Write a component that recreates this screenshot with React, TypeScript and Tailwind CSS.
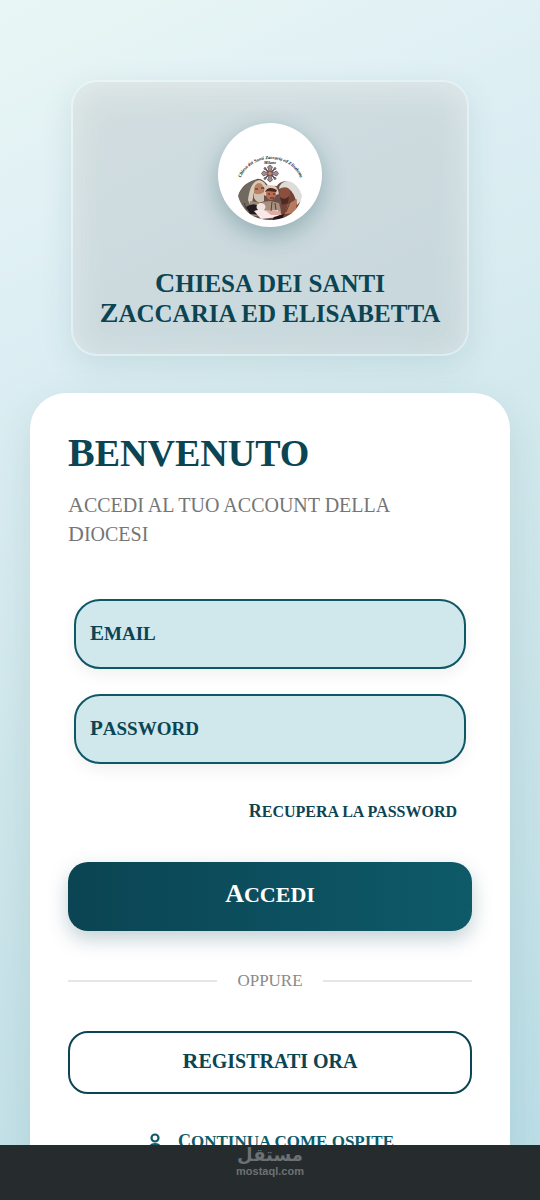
import type { ReactNode } from "react";

type FieldProps = {
  id: string;
  label: string;
  type: string;
};

function Field({ id, label, type }: FieldProps) {
  return (
    <div className="mx-1.5 flex h-[70px] items-center rounded-[26px] border-2 border-[#0d5866] bg-[#d0e8ec] px-3.5 shadow-[0_6px_16px_rgba(0,0,0,0.06)]">
      <label
        htmlFor={id}
        className="block text-[19px] leading-6 font-bold uppercase text-[#0b4453] first-letter:text-[21px] first-letter:leading-none"
      >
        {label}
      </label>
      <input
        id={id}
        type={type}
        className="ml-3 min-w-0 flex-1 bg-transparent text-[19px] text-[#0b4453] outline-none"
      />
    </div>
  );
}

function TitleLine({ children }: { children: ReactNode }) {
  return <span className="block first-letter:text-[28px] first-letter:leading-none">{children}</span>;
}

function Emblem() {
  return (
    <svg viewBox="0 0 104 104" className="size-full" role="img" aria-label="Chiesa dei Santi">
      <defs>
        <path id="arc" d="M21 64 A 31.500 28 0 0 1 84 64" />
        <clipPath id="family">
          <path d="M20 73 C23 63 31 58 39 56 C43 55 47 59 50 62 L59 63 C61 59 67 57 73 59 C80 62 83 69 84 73 C81 88 69 97 52 97 C36 97 25 89 20 73Z" />
        </clipPath>
        <filter id="soften">
          <feGaussianBlur stdDeviation="0.5" />
        </filter>
      </defs>
      <text fontSize="4.600" fontWeight="bold" fontStyle="italic" fill="#111" fontFamily="Liberation Serif, serif">
        <textPath href="#arc" startOffset="50%" textAnchor="middle">
          Chiesa dei Santi Zaccaria ed Elisabetta
        </textPath>
      </text>
      <text x="52" y="41" fontSize="4" fontWeight="bold" fontStyle="italic" textAnchor="middle" fill="#111" fontFamily="Liberation Serif, serif">
        Milano
      </text>
      <g stroke="#51444b" strokeWidth="0.700" fill="#a58d8c">
        <path d="m47 45.500 10 10M57 45.500l-10 10" strokeWidth="1.400" />
        <path d="M51 49.500 50.500 46 49.500 44 52 42 54.500 44 53.500 46 53 49.500 56.500 49 58.500 48 60.500 50.500 58.500 53 56.500 52 53 51.500 53.500 55 54.500 57 52 59 49.500 57 50.500 55 51 51.500 47.500 52 45.500 53 43.500 50.500 45.500 48 47.500 49Z" />
        <circle cx="47" cy="45.500" r="1" />
        <circle cx="57" cy="45.500" r="1" />
        <circle cx="47" cy="55.500" r="1" />
        <circle cx="57" cy="55.500" r="1" />
        <circle cx="52" cy="50.500" r="2.300" fill="#c58b6c" />
      </g>
      <g clipPath="url(#family)" filter="url(#soften)">
        <path fill="#6d5049" d="M18 54h68v46H18z" />
        {/* left figure */}
        <path fill="#70695e" d="M19 74 Q27 59 39 56 L33 78 34 91 25 91Z" />
        <path fill="#d8cbb8" d="M30 77 Q32 59 41 57 Q48 58 49 66 L43 63 Q36 64 35 75 L33 84Z" />
        <ellipse cx="41" cy="67" rx="5" ry="7" fill="#bb8063" />
        <path d="M36 70 Q41 73 46 69 L46 78 Q40 82 36 75Z" fill="#d0c2b2" />
        <path d="M37 66h3m3-1h3" stroke="#3f2924" strokeWidth="1" />
        <path fill="#9c8b79" d="M32 78 44 80 49 91 32 94Z" />
        {/* middle figure */}
        <path fill="#d9c8b4" d="M46 72 Q45 61 52 61 Q60 62 61 71 L58 72 48 73Z" />
        <ellipse cx="53" cy="71" rx="5" ry="6" fill="#b56e54" />
        <path fill="#4e251f" d="M47 69 Q50 62 59 67 L58 69 50 68Z" />
        <path fill="#a98f7e" d="M44 79 52 78 61 80 64 92 49 92Z" />
        <path d="M50 71h2m3 0h2m-5 4h4" stroke="#472218" strokeWidth="1" />
        {/* right figure */}
        <path fill="#744334" d="M64 68 75 68 82 80 78 95 63 96Z" />
        <ellipse cx="67" cy="70" rx="5" ry="7" fill="#8d503d" />
        <path fill="#dedcd9" d="M61 66 Q62 58 71 58 Q84 61 85 76 L79 82 Q77 70 70 65 Q66 63 61 66Z" />
        <path fill="#4f2b20" d="M62 74 Q67 78 71 73 L70 80 64 82Z" />
        <path fill="#b67a60" d="M70 81 79 76 78 90 67 91Z" />
        {/* child */}
        <path fill="#211e20" d="M28 84 Q37 78 42 85 L43 92 32 91Z" />
        <ellipse cx="43" cy="84" rx="4.500" ry="4" fill="#f0e4e0" />
        <path fill="#f6e9e7" d="M36 88 Q43 85 49 88 L60 87 61 94 43 96Z" />
        <path fill="#dfaaa2" d="M47 87 61 88 64 92 53 92Z" />
        <path fill="#22191a" d="M56 94 66 91 64 98H54Z" />
        <path d="m54 79-1 9m4-8 1 7m14-8-4 10m-42-9 3 7" stroke="#493832" strokeWidth="0.900" fill="none" />
      </g>
    </svg>
  );
}

export default function App() {
  return (
    <div className="flex h-screen flex-col overflow-hidden bg-[#262b2e] font-['Liberation_Serif',serif]">
      <main className="min-h-0 flex-1 overflow-hidden bg-linear-[155deg,#e9f6f5_0%,#deeff4_22%,#cde6ea_60%,#bcdee7_100%] px-[30px] pt-20">
        <header className="mx-[41px] flex flex-col items-center rounded-[26px] border-2 border-white/15 bg-[#8e8e8e]/20 bg-clip-padding px-4 pt-[41px] pb-[25px] shadow-[0_10px_32px_rgba(11,68,83,0.1),inset_0_6px_32px_rgba(255,255,255,0.4)]">
          <div className="size-[104px] overflow-hidden rounded-full bg-white shadow-[0_8px_24px_rgba(11,68,83,0.3)]">
            <Emblem />
          </div>
          <h1 className="mt-[42px] text-center text-[25px] leading-[30px] font-bold whitespace-nowrap text-[#0b4453] uppercase">
            <TitleLine>Chiesa dei santi</TitleLine>
            <TitleLine>Zaccaria ed Elisabetta</TitleLine>
          </h1>
        </header>

        <section className="mt-[37px] rounded-[36px] bg-white px-[38px] pt-10 pb-16 shadow-[0_12px_40px_rgba(11,68,83,0.1)]">
          <h2 className="text-[38px] leading-10 font-bold text-[#0b4453] uppercase first-letter:text-[40px] first-letter:leading-none">
            Benvenuto
          </h2>
          <p className="mt-[18px] text-[20px] leading-[29px] text-[#757575] uppercase">
            <span className="block first-letter:text-[22px] first-letter:leading-none">Accedi al tuo account della</span>
            <span className="block first-letter:text-[22px] first-letter:leading-none">Diocesi</span>
          </p>

          <form className="mt-[50px]" onSubmit={(e) => e.preventDefault()}>
            <div className="flex flex-col gap-[25px]">
              <Field id="email" label="Email" type="email" />
              <Field id="password" label="Password" type="password" />
            </div>

            <div className="mt-9 flex justify-end pr-[15px]">
              <a
                href="#recupera"
                className="block text-[16px] leading-6 font-bold text-[#0b4453] uppercase first-letter:text-[18px] first-letter:leading-none"
              >
                Recupera la password
              </a>
            </div>

            <button
              type="submit"
              className="mt-[38px] block h-[69px] w-full rounded-[20px] bg-linear-to-r from-[#0b4453] to-[#0e5a69] pb-1 text-[22px] leading-8 font-bold text-white uppercase shadow-[0_8px_20px_rgba(11,68,83,0.25)] first-letter:text-[26px] first-letter:leading-none"
            >
              Accedi
            </button>
          </form>

          <div className="mt-[38px] flex h-6 items-center gap-5">
            <span className="h-0.5 flex-1 bg-[#e6e6e6]" />
            <span className="text-[17px] text-[#8a8a8a] uppercase">oppure</span>
            <span className="h-0.5 flex-1 bg-[#e6e6e6]" />
          </div>

          <button
            type="button"
            className="mt-[38px] block h-[63px] w-full rounded-[20px] border-2 border-[#0b4453] pb-1 text-[20px] leading-7 font-bold text-[#0b4453] uppercase first-letter:text-[22px] first-letter:leading-none"
          >
            Registrati ora
          </button>

          <button
            type="button"
            className="mx-auto mt-9 flex items-center gap-3.5 text-[#0e5a69]"
          >
            <svg viewBox="0 0 18 24" className="h-6 w-[18px]" fill="none" stroke="currentColor" strokeWidth="2.200">
              <circle cx="9" cy="8" r="3.500" />
              <path d="M4 20v-2c0-3 2-4 5-4s5 1 5 4v2Z" />
            </svg>
            <span className="block text-[17px] leading-6 font-bold uppercase first-letter:text-[18px] first-letter:leading-none">
              Continua come ospite
            </span>
          </button>
        </section>
      </main>

      <footer className="flex h-[55px] shrink-0 flex-col items-center text-[#6d7173]">
        <span lang="ar" dir="rtl" className="font-['DejaVu_Sans',sans-serif] text-[18px] leading-5 font-bold">
          مستقل
        </span>
        <span className="font-['Liberation_Sans',sans-serif] text-[11px] leading-3 font-bold">
          mostaql.com
        </span>
      </footer>
    </div>
  );
}
